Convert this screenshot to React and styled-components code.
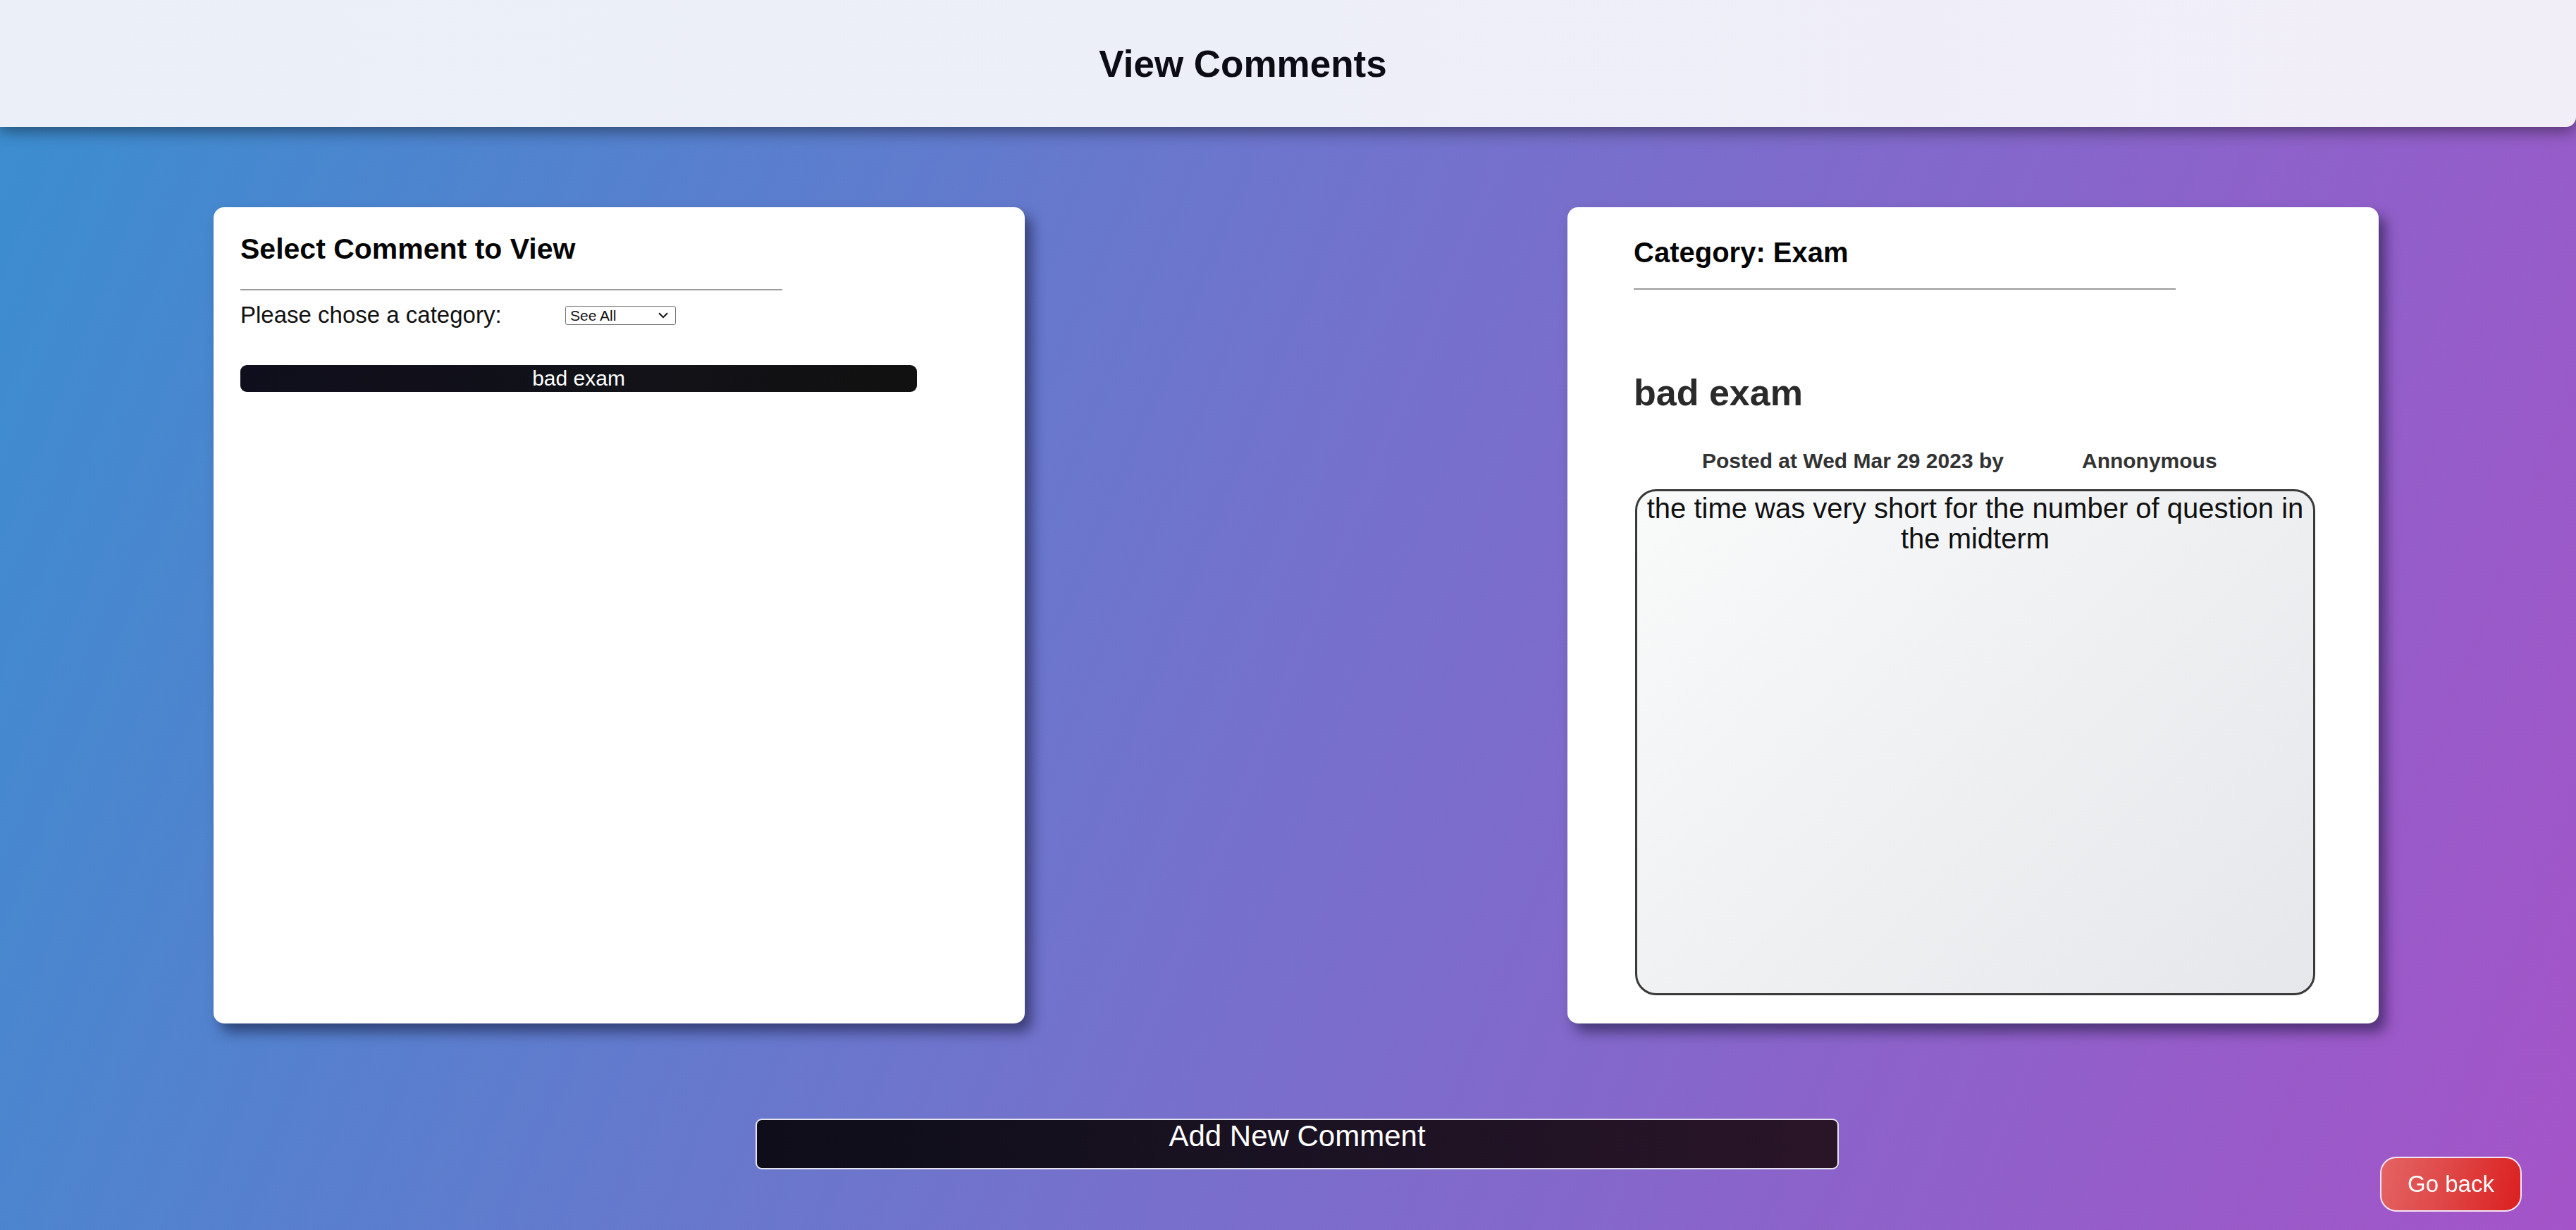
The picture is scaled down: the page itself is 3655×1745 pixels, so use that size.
import React from "react";
import styled, { createGlobalStyle } from "styled-components";

const Global = createGlobalStyle`
  html, body { margin: 0; padding: 0; }
  body {
    min-height: 1745px;
    font-family: "Liberation Sans", Arial, sans-serif;
    background: linear-gradient(112deg, #3a8ed0 0%, #6f74cc 45%, #a454c8 100%);
    background-attachment: fixed;
  }
`;

const Page = styled.div`
  min-height: 1745px;
  display: flex;
  flex-direction: column;
`;

const Header = styled.header`
  position: relative;
  z-index: 2;
  height: 180px;
  display: flex;
  align-items: center;
  justify-content: center;
  padding-right: 128px;
  background: linear-gradient(90deg, #ebf0f8 0%, #edeff8 50%, #f2eef8 100%);
  border-bottom-right-radius: 14px;
  box-shadow: 0 6px 22px rgba(0, 0, 0, 0.45);
`;

const Title = styled.h1`
  margin: 0;
  font-size: 53px;
  line-height: 61px;
  font-weight: 700;
  color: #0c0c14;
`;

const Main = styled.main`
  display: flex;
  flex-direction: column;
  padding-top: 114px;
`;

const CardRow = styled.div`
  display: flex;
  gap: 770px;
  padding-left: 303px;
`;

const Card = styled.section`
  box-sizing: border-box;
  width: 1151px;
  height: 1158px;
  background: #ffffff;
  border-radius: 15px;
  box-shadow: 10px 12px 18px rgba(10, 10, 40, 0.5);
  padding: ${(p) => p.$pad};
  display: flex;
  flex-direction: column;
`;

const CardTitle = styled.h2`
  margin: 0;
  font-size: ${(p) => p.$size}px;
  line-height: ${(p) => p.$lh}px;
  font-weight: 700;
  color: #050505;
`;

const Rule = styled.div`
  width: 769px;
  height: 2px;
  background: #9c9c9c;
  margin-top: ${(p) => p.$top}px;
`;

const FilterRow = styled.div`
  display: flex;
  align-items: center;
  margin-top: 16px;
  height: 38px;
`;

const FilterLabel = styled.label`
  font-size: 33px;
  line-height: 38px;
  color: #111;
  width: 461px;
`;

const SelectWrap = styled.div`
  position: relative;
  width: 157px;
  height: 27px;
`;

const Select = styled.select`
  appearance: none;
  -webkit-appearance: none;
  box-sizing: border-box;
  width: 157px;
  height: 27px;
  border: 1px solid #767676;
  border-radius: 3px;
  background: #fff;
  font-family: "Liberation Sans", Arial, sans-serif;
  font-size: 21px;
  color: #111;
  padding: 0 0 0 6px;
  margin: 0;
`;

const Chevron = styled.svg`
  position: absolute;
  right: 11px;
  top: 9px;
  width: 14px;
  height: 9px;
  pointer-events: none;
`;

const ListButton = styled.button`
  margin-top: 52px;
  width: 960px;
  height: 38px;
  border: none;
  border-radius: 9px;
  background: linear-gradient(90deg, #0f0e1c 0%, #121218 60%, #111111 100%);
  color: #fff;
  font-family: "Liberation Sans", Arial, sans-serif;
  font-size: 30px;
  line-height: 38px;
  padding: 0;
  cursor: pointer;
`;

const CommentTitle = styled.h3`
  margin: 116px 0 0 0;
  font-size: 52px;
  line-height: 60px;
  font-weight: 700;
  color: #2a2a2a;
`;

const MetaRow = styled.div`
  display: flex;
  gap: 111px;
  margin-top: 49px;
  padding-left: 97px;
  font-size: 30px;
  line-height: 35px;
  font-weight: 700;
  color: #333;
`;

const CommentBox = styled.div`
  box-sizing: border-box;
  margin-top: 23px;
  margin-left: 2px;
  width: 965px;
  height: 718px;
  border: 3px solid #3a3a3a;
  border-radius: 30px;
  background: linear-gradient(135deg, #f9fafa 0%, #eff0f2 50%, #e5e7ea 100%);
  padding: 3px 6px;
  text-align: center;
  font-size: 40px;
  line-height: 43px;
  color: #111;
`;

const Footer = styled.div`
  display: flex;
  margin-top: 135px;
  padding-left: 1072px;
`;

const AddButton = styled.button`
  box-sizing: border-box;
  width: 1537px;
  height: 72px;
  border: 2px solid #e4e4ee;
  border-radius: 9px;
  background: linear-gradient(90deg, #0e0d19 0%, #1a1222 50%, #2a1428 100%);
  color: #fff;
  font-family: "Liberation Sans", Arial, sans-serif;
  font-size: 42px;
  line-height: 46px;
  padding: 0;
  display: flex;
  align-items: flex-start;
  justify-content: center;
  cursor: pointer;
`;

const BackButton = styled.button`
  position: fixed;
  right: 77px;
  bottom: 26px;
  box-sizing: border-box;
  width: 201px;
  height: 78px;
  border: 2px solid #f4e6f4;
  border-radius: 23px;
  background: linear-gradient(105deg, #e46464 0%, #e04848 45%, #db1f1f 100%);
  color: #fff;
  font-family: "Liberation Sans", Arial, sans-serif;
  font-size: 33px;
  padding: 0;
  cursor: pointer;
`;

export default function App() {
  return (
    <Page>
      <Global />
      <Header>
        <Title>View Comments</Title>
      </Header>
      <Main>
        <CardRow>
          <Card $pad="36px 38px">
            <CardTitle $size={41} $lh={47}>Select Comment to View</CardTitle>
            <Rule $top={33} />
            <FilterRow>
              <FilterLabel>Please chose a category:</FilterLabel>
              <SelectWrap>
                <Select defaultValue="all">
                  <option value="all">See All</option>
                  <option value="exam">Exam</option>
                  <option value="course">Course</option>
                  <option value="other">Other</option>
                </Select>
                <Chevron viewBox="0 0 14 9">
                  <path d="M1 1.2 L7 7.2 L13 1.2" fill="none" stroke="#111" strokeWidth="2" />
                </Chevron>
              </SelectWrap>
            </FilterRow>
            <ListButton>bad exam</ListButton>
          </Card>
          <Card $pad="41px 90px 0 94px">
            <CardTitle $size={40} $lh={46}>Category: Exam</CardTitle>
            <Rule $top={28} />
            <CommentTitle>bad exam</CommentTitle>
            <MetaRow>
              <span>Posted at Wed Mar 29 2023 by</span>
              <span>Annonymous</span>
            </MetaRow>
            <CommentBox>
              the time was very short for the number of question in the midterm
            </CommentBox>
          </Card>
        </CardRow>
        <Footer>
          <AddButton>Add New Comment</AddButton>
        </Footer>
      </Main>
      <BackButton>Go back</BackButton>
    </Page>
  );
}
